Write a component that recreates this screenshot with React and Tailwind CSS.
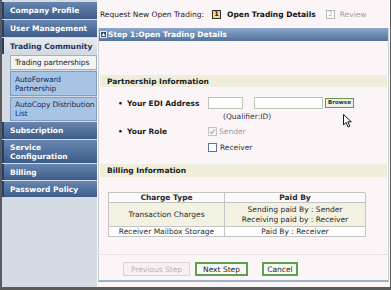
import React from "react";

function DarkItem({ children, h = "h-[17px]" }) {
  return (
    <div className={`${h} flex items-center pl-[6px] border-l-[2px] border-[#22406a] bg-linear-to-b from-[#6886b0] to-[#3d5c88] text-white font-bold leading-[9px]`}>
      <div>{children}</div>
    </div>
  );
}

function SubItem({ children, active, h }) {
  return (
    <div className={`${h} ml-[8px] flex items-center pl-[4px] border leading-[9px] whitespace-nowrap tracking-[-0.15px] ${active ? "bg-[#f3f3f3] border-[#a3afbf] text-[#1e1e1e]" : "bg-[#a8c4e5] border-[#7f9cc2] text-[#152e55]"}`}>
      <div>{children}</div>
    </div>
  );
}

function Cursor() {
  return (
    <svg className="absolute left-[343px] top-[114px]" width="10" height="14" viewBox="0 0 10 14">
      <path d="M0.5 0.5 L0.5 11 L3 8.5 L5 13 L6.8 12.2 L4.8 7.8 L8.3 7.8 Z" fill="#ffffff" stroke="#000000" strokeWidth="0.9" strokeLinejoin="round" />
    </svg>
  );
}

export default function App() {
  return (
    <div className="w-[391px] h-[290px] bg-[#5b5b5b] flex pl-[2px] pr-[1px] pb-[3px] font-['DejaVu_Sans',Verdana,sans-serif] text-[7.5px] leading-[9px] relative overflow-hidden">
      {/* Sidebar */}
      <div className="w-[95px] bg-[#d4dbe3] flex flex-col gap-[1px] pt-[2px]">
        <DarkItem>Company Profile</DarkItem>
        <DarkItem>User Management</DarkItem>
        <div className="h-[16px] flex items-center pl-[6px] border-l-[2px] border-[#22406a] bg-linear-to-b from-[#e6e9ee] to-[#d3d9e1] text-[#1b355e] font-bold">
          Trading Community
        </div>
        <SubItem active h="h-[15px]">Trading partnerships</SubItem>
        <SubItem h="h-[25px]">AutoForward<br />Partnership</SubItem>
        <SubItem h="h-[24px]">AutoCopy Distribution<br />List</SubItem>
        <DarkItem>Subscription</DarkItem>
        <DarkItem h="h-[23px]">Service<br />Configuration</DarkItem>
        <DarkItem h="h-[16px]">Billing</DarkItem>
        <DarkItem h="h-[16px]">Password Policy</DarkItem>
      </div>

      {/* Main */}
      <div className="w-[293px] bg-[#fcf5f8] flex flex-col pb-[5px]">
        {/* Step indicator */}
        <div className="h-[28px] flex items-center pl-[3px] text-[#222]">
          <span>Request New Open Trading:</span>
          <span className="ml-[8px] w-[9px] h-[9px] border border-[#333] bg-[#eedb8a] text-[6.5px] leading-none font-bold flex items-center justify-center text-[#222]">1</span>
          <span className="ml-[6px] font-bold text-[#111]">Open Trading Details</span>
          <span className="ml-[10px] w-[9px] h-[9px] border border-[#b8b8b8] bg-white text-[6.5px] leading-none flex items-center justify-center text-[#aaa]">2</span>
          <span className="ml-[5px] text-[#a0a0a0]">Review</span>
        </div>

        {/* Panel */}
        <div className="mx-[1px] flex-1 flex flex-col border-x border-[#cfcfd6] border-b-2 border-b-[#a3aec4]">
          <div className="h-[13px] flex items-center pl-[1px] bg-linear-to-b from-[#8ba7cc] to-[#53729c] text-white font-bold">
            <svg width="7" height="7" viewBox="0 0 7 7">
              <rect x="0.5" y="0.5" width="6" height="6" fill="#2b4a75" stroke="#e4ebf4" strokeWidth="1" />
              <path d="M3.5 1.8 L5.4 4.9 L1.6 4.9 Z" fill="#ffffff" />
            </svg>
            <span className="ml-[1px]">Step 1:Open Trading Details</span>
          </div>

          <div className="mt-[34px] mx-[1px] h-[12px] pl-[7px] flex items-center bg-[#efeedb] font-bold text-[#1a1a1a]">
            Partnership Information
          </div>

          {/* EDI Address */}
          <div className="mt-[10px] h-[12px] flex items-center">
            <div className="w-[109px] pl-[19px] flex items-center font-bold text-[#1a1a1a]">
              <span className="w-[9px]">•</span>
              <span>Your EDI Address</span>
            </div>
            <div className="w-[35px] h-[12px] border border-[#bac7b5] bg-white" />
            <div className="ml-[11px] w-[69px] h-[12px] border border-[#bac7b5] bg-white" />
            <div className="ml-[2px] w-[29px] h-[10px] border border-[#5f9a4e] bg-[#eef1ea] text-[5.5px] leading-none font-bold text-[#333] flex items-center justify-center">
              Browse
            </div>
          </div>
          <div className="mt-[3px] h-[9px] pl-[124px] text-[#333]">(Qualifier:ID)</div>

          {/* Role */}
          <div className="mt-[6px] h-[9px] flex items-center">
            <div className="w-[109px] pl-[19px] flex items-center font-bold text-[#1a1a1a]">
              <span className="w-[9px]">•</span>
              <span>Your Role</span>
            </div>
            <div className="w-[9px] h-[9px] border border-[#c4c4c4] bg-[#f4f4f4] flex items-center justify-center">
              <svg width="7" height="7" viewBox="0 0 7 7">
                <path d="M1 3.6 L2.8 5.4 L6 1.5" fill="none" stroke="#a9a9a9" strokeWidth="1.1" />
              </svg>
            </div>
            <span className="ml-[2px] text-[#999]">Sender</span>
          </div>
          <div className="mt-[7px] h-[9px] flex items-center">
            <div className="w-[109px]" />
            <div className="w-[9px] h-[9px] border border-[#55779f] bg-white" />
            <span className="ml-[3px] text-[#333]">Receiver</span>
          </div>

          <div className="mt-[12px] mx-[1px] h-[13px] pl-[7px] flex items-center bg-[#efeedb] font-bold text-[#1a1a1a]">
            Billing Information
          </div>

          {/* Table */}
          <div className="mt-[15px] ml-[9px] w-[257px] grid grid-cols-[116px_141px] border-t border-l border-[#c4c4c4] text-[#2a2a2a]">
            <div className="h-[10px] border-r border-b border-[#c4c4c4] bg-[#fcf9f9] font-bold flex items-center justify-center">Charge Type</div>
            <div className="h-[10px] border-r border-b border-[#c4c4c4] bg-[#fcf9f9] font-bold flex items-center justify-center">Paid By</div>
            <div className="h-[24px] border-r border-b border-[#c4c4c4] bg-[#f3f2e2] flex items-center justify-center">Transaction Charges</div>
            <div className="h-[24px] border-r border-b border-[#c4c4c4] bg-[#f3f2e2] flex flex-col items-center justify-center leading-[10px]">
              <span>Sending paid By : Sender</span>
              <span>Receiving paid by : Receiver</span>
            </div>
            <div className="h-[10px] border-r border-b border-[#c4c4c4] bg-white flex items-center justify-center">Receiver Mailbox Storage</div>
            <div className="h-[10px] border-r border-b border-[#c4c4c4] bg-white flex items-center justify-center">Paid By : Receiver</div>
          </div>

          <div className="mt-[17px] mx-[1px] border-t border-dotted border-[#d6ccd6]" />

          {/* Buttons */}
          <div className="mt-[7px] pl-[24px] flex items-center">
            <div className="w-[67px] h-[14px] border border-[#ddd3d3] bg-[#f7f1f1] text-[#b3b3b3] flex items-center justify-center">Previous Step</div>
            <div className="ml-[5px] w-[53px] h-[14px] border-2 border-[#5f9f50] bg-[#f9f9f5] text-[#222] flex items-center justify-center">Next Step</div>
            <div className="ml-[14px] w-[36px] h-[14px] border-2 border-[#5f9f50] bg-[#f9f9f5] text-[#222] flex items-center justify-center">Cancel</div>
          </div>
        </div>
      </div>

      <Cursor />
    </div>
  );
}
